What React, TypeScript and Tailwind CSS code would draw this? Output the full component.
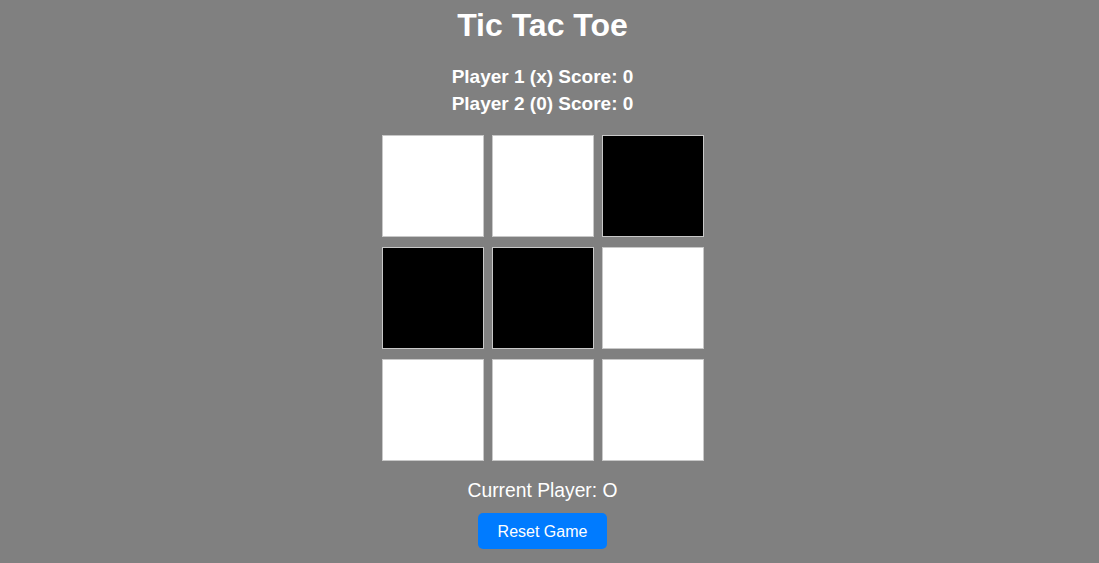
import React, { useState } from "react";

export default function App() {
  const initial: (string | null)[] = [null, null, "b", "b", "b", null, null, null, null];
  const [cells] = useState(initial);
  return (
    <div
      className="min-h-screen w-full bg-[#808080] text-white flex flex-col items-center pr-[14px]"
      style={{ fontFamily: '"Liberation Sans", Arial, sans-serif' }}
    >
      <h1 className="mt-[7px] text-[32px] leading-[37px] font-bold">Tic Tac Toe</h1>
      <div className="mt-[19px] flex flex-col items-center text-[19px] leading-[27px] font-bold">
        <div>Player 1 (x) Score: 0</div>
        <div>Player 2 (0) Score: 0</div>
      </div>
      <div className="mt-[18px] grid grid-cols-[102px_102px_102px] gap-x-[8px] gap-y-[10px]">
        {cells.map((c, i) => (
          <div
            key={i}
            className={`h-[102px] w-[102px] border border-[#c8c8c8] ${c ? "bg-black" : "bg-white"}`}
          />
        ))}
      </div>
      <div className="mt-[19px] text-[19.3px] leading-[22px]">Current Player: O</div>
      <button className="mt-[11px] h-[36px] px-5 pt-px rounded-[5px] bg-[#007bff] text-white text-[16px] leading-[18px]">
        Reset Game
      </button>
    </div>
  );
}
